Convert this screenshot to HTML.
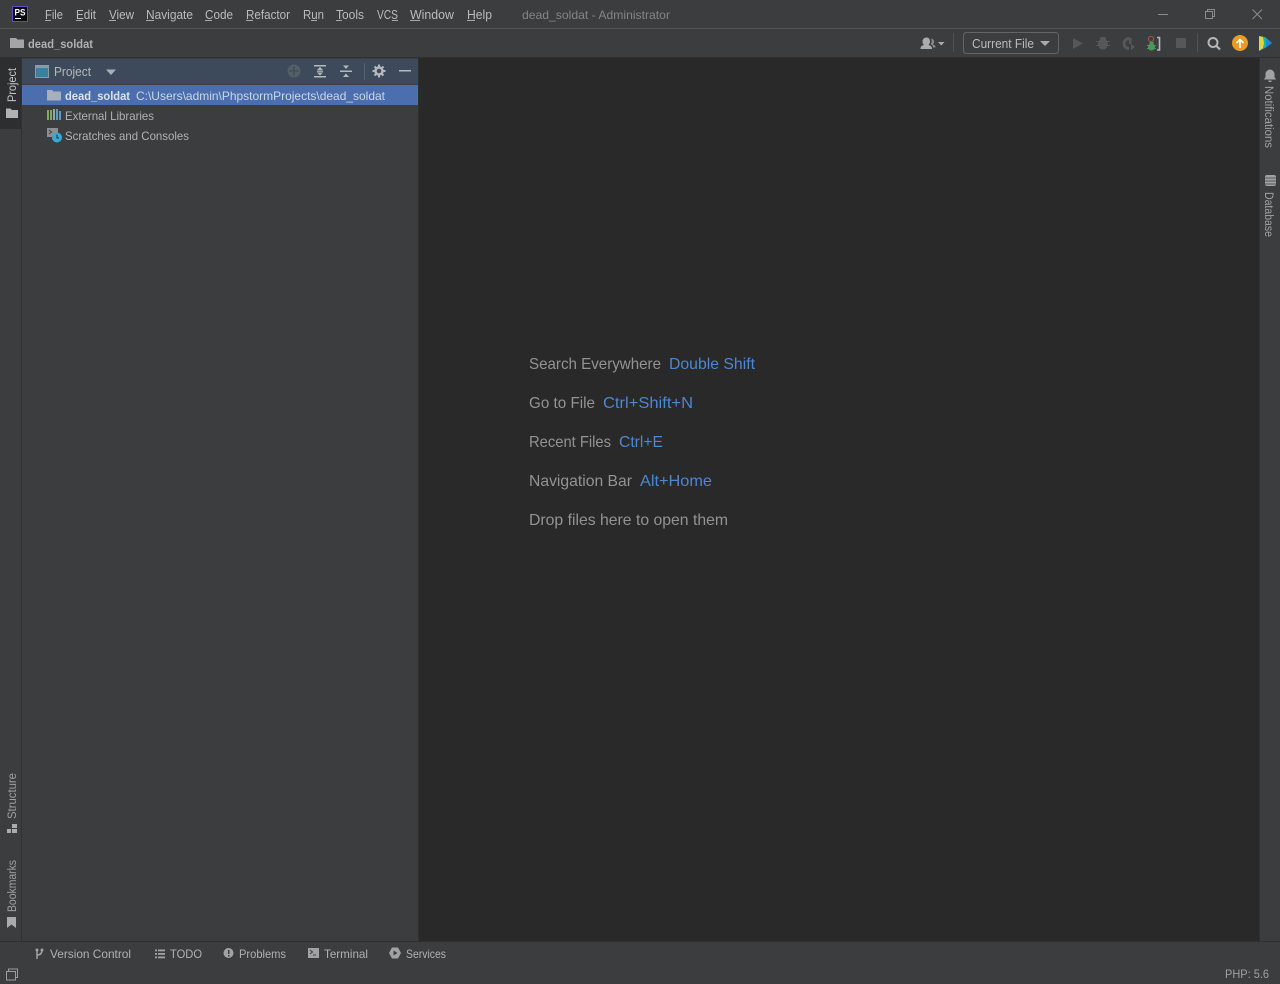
<!DOCTYPE html>
<html><head><meta charset="utf-8"><style>
html,body{margin:0;padding:0;background:#3c3d3f;width:1280px;height:984px;overflow:hidden}
svg{display:block;position:absolute;left:0;top:0}
text{font-family:"Liberation Sans",sans-serif;white-space:pre}
.m{font-size:12.5px;fill:#bbbbbb}
.s{font-size:12px;fill:#afb1b3}
.w{font-size:16px;fill:#939393}
.k{font-size:16px;fill:#4d87d0}
</style></head><body>
<svg width="1280" height="984" viewBox="0 0 1280 984" xmlns="http://www.w3.org/2000/svg">
<rect width="1280" height="984" fill="#3c3d3f"/>
<!-- separators -->
<rect x="0" y="28" width="1280" height="1" fill="#525253"/>
<rect x="0" y="57" width="1280" height="1" fill="#303030"/>
<!-- left project tab -->
<rect x="0" y="58" width="22" height="71" fill="#2d2e2f"/>
<rect x="21" y="58" width="1" height="883" fill="#323232"/>
<!-- panel -->
<rect x="22" y="58" width="396" height="883" fill="#3c3d3f"/>
<rect x="22" y="59" width="396" height="25" fill="#3d4a5b"/>
<rect x="22" y="85" width="396" height="20" fill="#4b6eaf"/>
<!-- editor -->
<rect x="419" y="58" width="840" height="883" fill="#292929"/>
<rect x="418" y="58" width="1" height="883" fill="#303030"/>
<rect x="1259" y="58" width="1" height="883" fill="#303030"/>
<rect x="0" y="941" width="1280" height="1" fill="#303030"/>

<!-- PS logo -->
<rect x="12.500" y="6.500" width="15" height="15" fill="#0a0a12" stroke="#5b4fc0"/>
<text x="14.500" y="15.500" style="font-size:9px;font-weight:bold;fill:#fff" textLength="11" lengthAdjust="spacingAndGlyphs">PS</text>
<rect x="15" y="18" width="6" height="1" fill="#fff"/>

<!-- menu -->
<text class="m" x="45" y="19" textLength="18" lengthAdjust="spacingAndGlyphs">File</text>
<text class="m" x="76" y="19" textLength="20" lengthAdjust="spacingAndGlyphs">Edit</text>
<text class="m" x="109" y="19" textLength="25" lengthAdjust="spacingAndGlyphs">View</text>
<text class="m" x="146" y="19" textLength="47" lengthAdjust="spacingAndGlyphs">Navigate</text>
<text class="m" x="205" y="19" textLength="28" lengthAdjust="spacingAndGlyphs">Code</text>
<text class="m" x="246" y="19" textLength="44" lengthAdjust="spacingAndGlyphs">Refactor</text>
<text class="m" x="303" y="19" textLength="21" lengthAdjust="spacingAndGlyphs">Run</text>
<text class="m" x="336" y="19" textLength="28" lengthAdjust="spacingAndGlyphs">Tools</text>
<text class="m" x="377" y="19" textLength="21" lengthAdjust="spacingAndGlyphs">VCS</text>
<text class="m" x="410" y="19" textLength="44" lengthAdjust="spacingAndGlyphs">Window</text>
<text class="m" x="467" y="19" textLength="25" lengthAdjust="spacingAndGlyphs">Help</text>
<g fill="#a8a8a8">
<rect x="45" y="20" width="6" height="1"/><rect x="76" y="20" width="6" height="1"/><rect x="109" y="20" width="7" height="1"/><rect x="146" y="20" width="8" height="1"/><rect x="205" y="20" width="7" height="1"/><rect x="246" y="20" width="7" height="1"/><rect x="311" y="20" width="6" height="1"/><rect x="336" y="20" width="6" height="1"/><rect x="392" y="20" width="6" height="1"/><rect x="410" y="20" width="10" height="1"/><rect x="467" y="20" width="8" height="1"/>
</g>
<text x="522" y="19" style="font-size:12px;fill:#858585" textLength="148" lengthAdjust="spacingAndGlyphs">dead_soldat - Administrator</text>

<!-- window buttons -->
<rect x="1158" y="14" width="10" height="1" fill="#8c8c8c"/>
<g fill="none" stroke="#8c8c8c"><rect x="1205.500" y="11.500" width="7" height="7"/><path d="M1207.500 11.500V9.500h7v7h-2"/><path d="M1252.500 9.500l9.500 9.500M1262 9.500l-9.500 9.500"/></g>

<!-- nav bar -->
<path d="M10 38h6l1.500 1.500H24V48H10z" fill="#a4a5a7"/>
<text x="28" y="48" style="font-size:12px;font-weight:bold;fill:#b0b1b3" textLength="65" lengthAdjust="spacingAndGlyphs">dead_soldat</text>
<!-- user icon -->
<g fill="#a9abad"><path d="M926.500 37.500c2.300 0 3.500 1.700 3.500 4 0 1.500-.7 2.800-1.500 3.500 2 .5 3.500 1.300 3.500 4h-11.500c0-2.700 1.500-3.500 3.500-4-.8-.7-1.500-2-1.500-3.500 0-2.300 1.700-4 4-4z"/><path d="M931.500 38.500c1.700.4 2.500 1.700 2.500 3.300 0 1-.4 2-1 2.600 1.500.5 2.500 1.300 2.500 3.100h-2.500c0-1.700-1-3-2.300-3.500.6-.8 1-1.800 1-3 0-1-.2-1.800-.7-2.500z" fill="#8a8c8e"/><path d="M938 42h6.500l-3.250 3.500z"/></g>
<rect x="953" y="33" width="1" height="19" fill="#515151"/>
<rect x="963.500" y="32.500" width="95" height="21" rx="3" fill="#3c3d3f" stroke="#646464"/>
<text x="972" y="48" style="font-size:12.500px;fill:#bbbbbb" textLength="62" lengthAdjust="spacingAndGlyphs">Current File</text>
<path d="M1040 41h10l-5 5z" fill="#a9abad"/>
<!-- run -->
<path d="M1073 38l10 5.500-10 5.500z" fill="#555759"/>
<!-- debug -->
<g fill="#555759"><ellipse cx="1103" cy="44" rx="5" ry="5.500"/><rect x="1100" y="37" width="6" height="3" rx="1.500"/><path d="M1096 41h14v1h-14zM1096 45h14v1h-14z"/></g>
<!-- coverage -->
<g fill="#555759"><path d="M1129 37a6.500 6.500 0 1 0 0 13v-3a3.500 3.500 0 1 1 0-7z"/><path d="M1129 37.500l2.500.5v6l-2.500 0z"/><path d="M1131 44l4 3-4 3z"/></g>
<!-- attach -->
<circle cx="1151" cy="39" r="2.600" fill="none" stroke="#b05050"/>
<g fill="#459a5b"><ellipse cx="1151.500" cy="47" rx="3.500" ry="3.500"/><rect x="1147" y="45" width="9" height="1"/><rect x="1147" y="48" width="9" height="1"/><rect x="1149.500" y="42" width="4" height="2"/></g>
<path d="M1157 37.500h2.500v12.500H1157" fill="none" stroke="#b7b9bb" stroke-width="1.600"/>
<!-- stop -->
<rect x="1176" y="38" width="10" height="10" fill="#555759"/>
<rect x="1197" y="33" width="1" height="19" fill="#515151"/>
<!-- search -->
<circle cx="1213" cy="42.500" r="4.500" fill="none" stroke="#b4b6b8" stroke-width="2"/>
<path d="M1216.500 46l3.500 3.500" stroke="#b4b6b8" stroke-width="2.200"/>
<!-- update -->
<circle cx="1240" cy="43" r="8" fill="#e89c26"/>
<path d="M1240 48v-7M1236.500 43l3.500-3.500 3.500 3.500" fill="none" stroke="#fff" stroke-width="1.600"/>
<!-- toolbox -->
<path d="M1259 36l6 1 7 6-7 5-6 3z" fill="#21b28f"/>
<path d="M1259 36l4 1 1 6-1 5-4 3z" fill="#e0d447"/>
<path d="M1266 39l6 4-6 4.500z" fill="#1e88d8"/>

<!-- left strip -->
<text transform="translate(16,102) rotate(-90)" style="font-size:12px;fill:#c4c6c8" textLength="34" lengthAdjust="spacingAndGlyphs">Project</text>
<path d="M6 108.500h4.500l1.500 1.500h6v8H6z" fill="#b0b2b4"/>
<text transform="translate(16,819) rotate(-90)" style="font-size:11.500px;fill:#a0a1a2" textLength="46" lengthAdjust="spacingAndGlyphs">Structure</text>
<g fill="#a9abad"><rect x="12" y="824" width="5" height="4"/><rect x="12" y="829" width="5" height="4"/><rect x="7" y="829" width="4" height="4"/></g>
<text transform="translate(16,912) rotate(-90)" style="font-size:11.500px;fill:#a0a1a2" textLength="52" lengthAdjust="spacingAndGlyphs">Bookmarks</text>
<path d="M7 917h9v11l-4.500-3.500L7 928z" fill="#a9abad"/>

<!-- panel header -->
<rect x="35.500" y="65.500" width="13" height="12" fill="#3c7f9f" stroke="#8a9aa8"/>
<rect x="35" y="65" width="14" height="3" fill="#8a9aa8"/>
<text x="54" y="76" style="font-size:12.500px;fill:#b4b8bc" textLength="37" lengthAdjust="spacingAndGlyphs">Project</text>
<path d="M106 69.500h10l-5 5.500z" fill="#a9b0b7"/>
<circle cx="294" cy="71" r="6.500" fill="#535e69"/>
<path d="M294 66.500v9M289.500 71h9" stroke="#414d59" stroke-width="1.500"/>
<g fill="#b4b8bc"><rect x="314" y="65" width="12" height="1.500"/><rect x="314" y="76" width="12" height="1.500"/><path d="M320 67l3 3h-6zM320 75.500l3-3h-6z"/><rect x="317" y="70.600" width="6" height="1.200"/></g>
<g fill="#b4b8bc"><rect x="340" y="70.500" width="12" height="1.500"/><path d="M343 65.500h6l-3 3.500zM343 77h6l-3-3.500z"/></g>
<rect x="364" y="63" width="1" height="17" fill="#526170"/>
<g fill="none" stroke="#b4b8bc"><circle cx="379" cy="71" r="3.500" stroke-width="2.500"/><path d="M379 64.500v2.500M379 75v2.500M372.500 71h2.500M383 71h2.500M374.500 66.500l1.700 1.700M381.800 73.800l1.700 1.700M383.500 66.500l-1.700 1.700M376.200 73.800l-1.700 1.700" stroke-width="2"/></g>
<rect x="399" y="70" width="12" height="1.500" fill="#b4b8bc"/>

<!-- tree -->
<path d="M47 90h5l1.500 1.500H61v9H47z" fill="#a6afbc"/>
<text x="65" y="100" style="font-size:12px;font-weight:bold;fill:#dde2ea" textLength="65" lengthAdjust="spacingAndGlyphs">dead_soldat</text>
<text x="136" y="100" style="font-size:12px;fill:#cdd5e2" textLength="249" lengthAdjust="spacingAndGlyphs">C:\Users\admin\PhpstormProjects\dead_soldat</text>
<g><rect x="47" y="110" width="2" height="10" fill="#7fa869"/><rect x="50" y="110" width="2" height="10" fill="#7fa869"/><rect x="53" y="109" width="2" height="11" fill="#a0a3a6"/><rect x="56" y="109" width="2" height="11" fill="#4f9fbe"/><rect x="59" y="111" width="2" height="9" fill="#4f9fbe"/></g>
<text x="65" y="120" style="font-size:12px;fill:#afb1b3" textLength="89" lengthAdjust="spacingAndGlyphs">External Libraries</text>
<rect x="47" y="128" width="11" height="9" fill="#8c8e90"/>
<path d="M49 130l2.500 2-2.500 2" fill="none" stroke="#3c3d3f"/>
<circle cx="57" cy="137.500" r="5" fill="#3aa7d5"/>
<path d="M57 134.500v3.500h2" fill="none" stroke="#20323c"/>
<text x="65" y="140" style="font-size:12px;fill:#afb1b3" textLength="124" lengthAdjust="spacingAndGlyphs">Scratches and Consoles</text>

<!-- welcome -->
<text class="w" x="529" y="369" textLength="132" lengthAdjust="spacingAndGlyphs">Search Everywhere</text>
<text class="k" x="669" y="369" textLength="86" lengthAdjust="spacingAndGlyphs">Double Shift</text>
<text class="w" x="529" y="408" textLength="66" lengthAdjust="spacingAndGlyphs">Go to File</text>
<text class="k" x="603" y="408" textLength="90" lengthAdjust="spacingAndGlyphs">Ctrl+Shift+N</text>
<text class="w" x="529" y="447" textLength="82" lengthAdjust="spacingAndGlyphs">Recent Files</text>
<text class="k" x="619" y="447" textLength="44" lengthAdjust="spacingAndGlyphs">Ctrl+E</text>
<text class="w" x="529" y="486" textLength="103" lengthAdjust="spacingAndGlyphs">Navigation Bar</text>
<text class="k" x="640" y="486" textLength="72" lengthAdjust="spacingAndGlyphs">Alt+Home</text>
<text class="w" x="529" y="525" textLength="199" lengthAdjust="spacingAndGlyphs">Drop files here to open them</text>

<!-- right strip -->
<path d="M1270 69.500a4.500 4.500 0 0 1 4.500 4.500v3l1.500 2.500h-12l1.500-2.500v-3a4.500 4.500 0 0 1 4.500-4.500z" fill="#a0a2a4"/>
<rect x="1268.500" y="80.500" width="3" height="1.500" fill="#a0a2a4"/>
<text transform="translate(1265,86) rotate(90)" style="font-size:11.500px;fill:#a0a1a2" textLength="62" lengthAdjust="spacingAndGlyphs">Notifications</text>
<g fill="#a0a2a4"><rect x="1265" y="175" width="11" height="11" rx="2"/></g>
<path d="M1268 175v11M1271 175v11M1274 175v11" stroke="#3c3d3f" stroke-width=".8" transform="rotate(90 1270.500 180.500)"/>
<text transform="translate(1265,192) rotate(90)" style="font-size:11.500px;fill:#a0a1a2" textLength="45" lengthAdjust="spacingAndGlyphs">Database</text>

<!-- bottom tool bar -->
<g fill="none" stroke="#a0a2a4" stroke-width="1.500"><path d="M37 949v10"/><path d="M37 955c3 0 5-1.500 5-5"/></g>
<circle cx="37" cy="950" r="1.500" fill="#a0a2a4"/><circle cx="42" cy="950" r="1.500" fill="#a0a2a4"/>
<text class="s" x="50" y="958" textLength="81" lengthAdjust="spacingAndGlyphs">Version Control</text>
<g fill="#a0a2a4"><rect x="155" y="949.500" width="2" height="1.800"/><rect x="158" y="949.500" width="7" height="1.800"/><rect x="155" y="953" width="2" height="1.800"/><rect x="158" y="953" width="7" height="1.800"/><rect x="155" y="956.500" width="2" height="1.800"/><rect x="158" y="956.500" width="7" height="1.800"/></g>
<text class="s" x="170" y="958" textLength="32" lengthAdjust="spacingAndGlyphs">TODO</text>
<circle cx="228.500" cy="953" r="5" fill="#a0a2a4"/><rect x="228" y="950" width="1.500" height="4" fill="#3c3d3f"/><rect x="228" y="955" width="1.500" height="1.500" fill="#3c3d3f"/>
<text class="s" x="239" y="958" textLength="47" lengthAdjust="spacingAndGlyphs">Problems</text>
<rect x="308" y="948" width="11" height="10" fill="#a0a2a4"/><path d="M310 950l2.500 2-2.500 2M313 955h3" fill="none" stroke="#3c3d3f"/>
<text class="s" x="324" y="958" textLength="44" lengthAdjust="spacingAndGlyphs">Terminal</text>
<path d="M392 947.500h6l3 5.500-3 5.500h-6l-3-5.500z" fill="#a0a2a4"/><path d="M393.500 950.500l4 2.500-4 2.500z" fill="#3c3d3f"/>
<text class="s" x="406" y="958" textLength="40" lengthAdjust="spacingAndGlyphs">Services</text>

<!-- status bar -->
<g fill="none" stroke="#9a9c9e"><rect x="6.500" y="971.500" width="9" height="8.500"/><path d="M8.500 971.500v-2.500h9v8.500h-2"/></g>
<text x="1225" y="978" style="font-size:12px;fill:#a0a1a2" textLength="44" lengthAdjust="spacingAndGlyphs">PHP: 5.6</text>
</svg>
</body></html>
